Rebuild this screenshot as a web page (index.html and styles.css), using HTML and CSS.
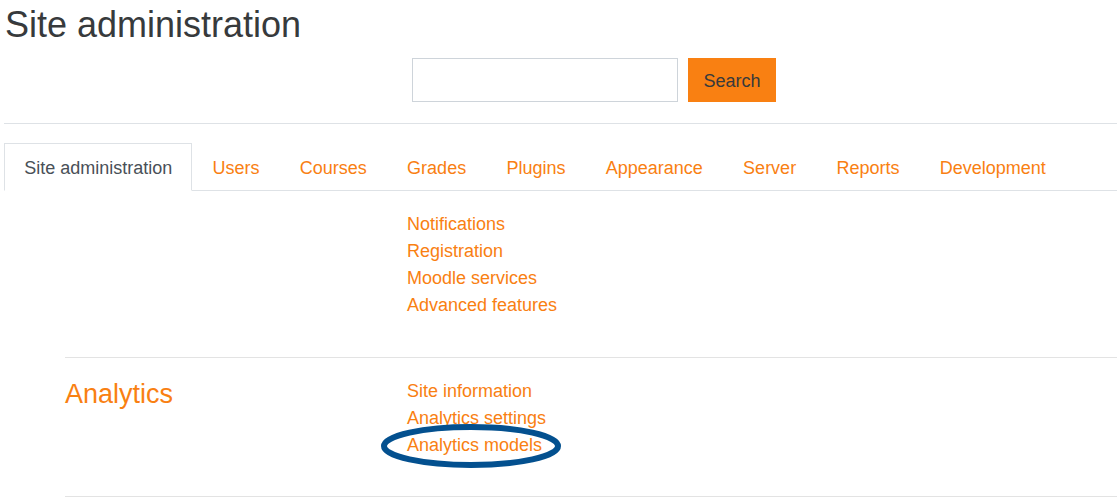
FILE: index.html
```html
<!DOCTYPE html>
<html lang="en">
<head>
<meta charset="utf-8">
<title>Site administration</title>
<link rel="stylesheet" href="styles.css">
</head>
<body>
<h1 class="page-title">Site administration</h1>
<form class="search-form">
  <input class="search-input" type="text" aria-label="Search">
  <button class="search-btn" type="button">Search</button>
</form>
<hr class="divider">
<ul class="tabs">
  <li class="tab active"><a href="#">Site administration</a></li>
  <li class="tab"><a href="#">Users</a></li>
  <li class="tab"><a href="#">Courses</a></li>
  <li class="tab"><a href="#">Grades</a></li>
  <li class="tab"><a href="#">Plugins</a></li>
  <li class="tab"><a href="#">Appearance</a></li>
  <li class="tab"><a href="#">Server</a></li>
  <li class="tab"><a href="#">Reports</a></li>
  <li class="tab"><a href="#">Development</a></li>
</ul>
<div class="sections">
  <section class="category first">
    <div class="cat-head"></div>
    <ul class="cat-links">
      <li><a href="#">Notifications</a></li>
      <li><a href="#">Registration</a></li>
      <li><a href="#">Moodle services</a></li>
      <li><a href="#">Advanced features</a></li>
    </ul>
  </section>
  <section class="category last">
    <div class="cat-head"><a href="#">Analytics</a></div>
    <ul class="cat-links">
      <li><a href="#">Site information</a></li>
      <li><a href="#">Analytics settings</a></li>
      <li class="marked"><a href="#">Analytics models</a>
        <svg class="circle-mark" width="180" height="44" viewBox="0 0 180 44" aria-hidden="true">
          <ellipse cx="90" cy="22" rx="87" ry="19" fill="none" stroke="#03508f" stroke-width="6"/>
        </svg>
      </li>
    </ul>
  </section>
  <div class="end-rule"></div>
</div>
</body>
</html>
```
FILE: styles.css
```css
html, body {
  background: #fff;
}
body {
  margin: 0 0 0 4px;
  font-family: "Liberation Sans", Arial, sans-serif;
  font-size: 18px;
  color: #373a3c;
}
a {
  color: #f98012;
  text-decoration: none;
}
.page-title {
  margin: 3px 0 0 1px;
  font-size: 36px;
  font-weight: normal;
  line-height: 43px;
  color: #373a3c;
}
.search-form {
  display: flex;
  gap: 10px;
  margin: 12px 0 0 408px;
}
.search-input {
  box-sizing: border-box;
  width: 266px;
  height: 44px;
  margin: 0;
  border: 1px solid #ced4da;
  border-radius: 0;
  padding: 6px 12px;
  font: 18px "Liberation Sans", Arial, sans-serif;
}
.search-btn {
  box-sizing: border-box;
  width: 88px;
  height: 44px;
  margin: 0;
  border: 0;
  border-radius: 0;
  padding: 2px 0 0;
  background: #f98012;
  color: #373a3c;
  font: 18px "Liberation Sans", Arial, sans-serif;
}
.divider {
  margin: 21px 0 0;
  border: 0;
  border-top: 1px solid #dee2e6;
  height: 0;
}
.tabs {
  display: flex;
  list-style: none;
  margin: 19px 0 0;
  padding: 0;
  border-bottom: 1px solid #dee2e6;
}
.tab {
  margin-bottom: -1px;
}
.tab a {
  display: block;
  padding: 11px 19.15px 9px;
  line-height: 26px;
  border: 1px solid transparent;
}
.tab.active a {
  color: #495057;
  border-color: #dee2e6 #dee2e6 #fff;
  background: #fff;
}
.sections {
  margin-left: 61px;
}
.category {
  display: grid;
  grid-template-columns: 342px 1fr;
  padding: 20px 0 38px;
  border-top: 1px solid #e3e3e3;
}
.category.first {
  border-top: 0;
}
.category.last {
  padding-bottom: 37px;
}
.cat-head {
  font-size: 27px;
  line-height: 32px;
}
.cat-links {
  list-style: none;
  margin: 0;
  padding: 0;
  line-height: 27px;
}
.marked {
  position: relative;
}
.circle-mark {
  position: absolute;
  left: -26px;
  top: -8px;
  pointer-events: none;
}
.end-rule {
  border-top: 1px solid #e3e3e3;
}
```
